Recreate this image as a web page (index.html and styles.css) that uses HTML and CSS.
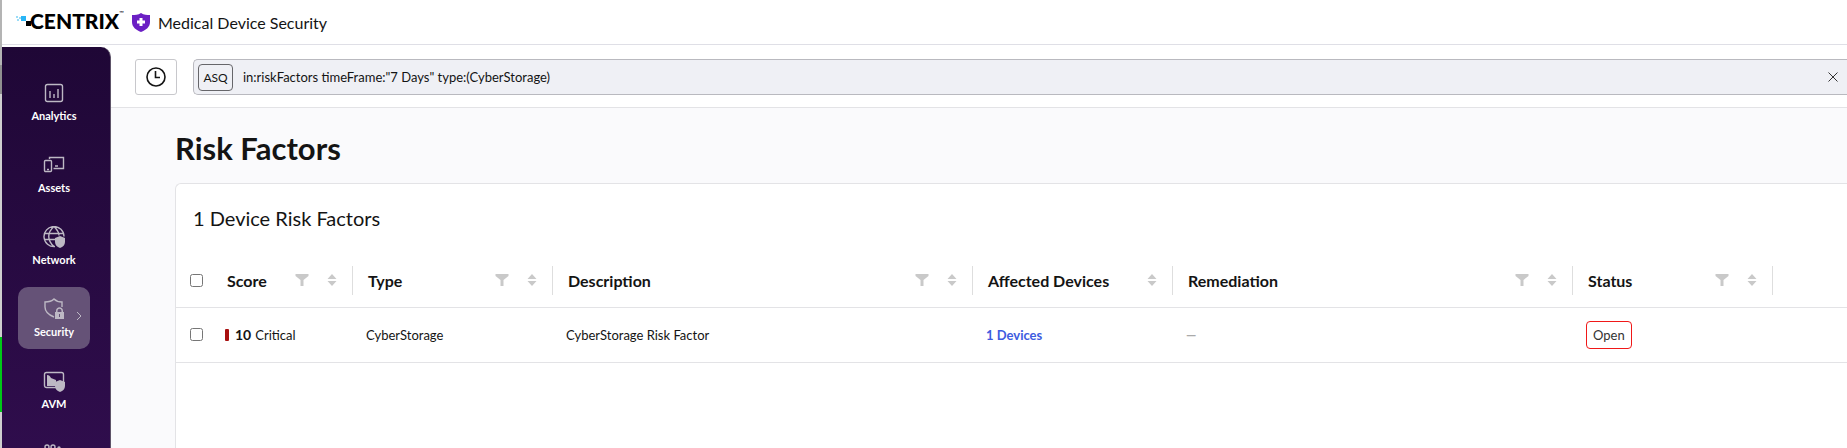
FILE: index.html
```html
<!DOCTYPE html>
<html lang="en">
<head>
  <meta charset="UTF-8" />
  <title>Medical Device Security - Risk Factors</title>
  <link rel="stylesheet" href="styles.css">
</head>
<body>
  <!-- Shared icons -->
  <svg class="icon-defs" width="0" height="0">
    <symbol id="filter" viewBox="0 0 14 12"><path d="M.5 0h13v2L8.500 6v6h-3V6L.5 2z" /></symbol>
    <symbol id="sort" viewBox="0 0 10 12"><path d="M5 0l4.500 5h-9zM.5 7h9L5 12z" /></symbol>
    <symbol id="mini-shield" viewBox="0 0 10 12"><path d="M5 0l5 2v4c0 3-2 5-5 6-3-1-5-3-5-6V2z" /></symbol>
  </svg>

  <div class="app">
    <div class="edge"></div>
    <header class="topbar">
      <div class="logo">
        <svg width="17" height="17" viewBox="0 0 17 17">
          <path fill="#9adcf7" d="M0 4h2v2H0zM1 7h2v2H1zM3 5h2v2H3z" />
          <path fill="#29b5f6" d="M5 4h5v5H5z" />
          <path fill="#000" d="M10 9h5v5h-5z" />
        </svg>
        <span class="logo-text">CENTRIX</span><span class="tm">™</span>
      </div>
      <svg class="product-icon" width="18" height="19" viewBox="0 0 18 19">
        <path fill="#6b1fc4" d="M9 0c3 2 6 2 9 2v7c0 5-4 8-9 10-5-2-9-5-9-10V2c3 0 6 0 9-2z" />
        <path fill="#fff" d="M7.500 5h3v2.500H13v3h-2.500V13h-3v-2.500H5v-3h2.500z" />
      </svg>
      <span class="product">Medical Device Security</span>
    </header>

    <div class="body">
      <nav class="sidebar">
        <a class="nav-item" href="#">
          <svg width="22" height="22" viewBox="0 0 22 22">
            <rect x="2.500" y="2.500" width="17" height="17" rx="2" />
            <path d="M7 9v7M11 12v4M15 7v9" />
          </svg>
          <span>Analytics</span>
        </a>
        <a class="nav-item" href="#">
          <svg width="22" height="22" viewBox="0 0 22 22">
            <path d="M6.500 5V3.500h14v11h-10" />
            <rect x="1.500" y="6.500" width="7" height="11" rx="1" />
            <path d="M4 15.500h2M12 12h3" />
          </svg>
          <span>Assets</span>
        </a>
        <a class="nav-item" href="#">
          <svg width="22" height="22" viewBox="0 0 22 22">
            <path d="M12 20.500a10 10 0 1 1 9-10M1 7.500h19M1 13.500h11M11 .5c-7 6-7 14 0 20M11 .5c3 3 5 6 5 9" />
            <use class="solid" href="#mini-shield" x="12" y="10" width="10" height="12" />
          </svg>
          <span>Network</span>
        </a>
        <a class="nav-item active" href="#">
          <svg width="22" height="22" viewBox="0 0 22 22">
            <path d="M11 19c-5-2-9-5-9-10V4c4 0 7-1 9-3 2 2 5 3 8 3v5" />
            <path class="solid" fill-rule="evenodd" d="M12 14h1v-1c0-5 7-5 7 0v1h1v7h-9zM14.500 14h4v-1c0-3-4-3-4 0zM16 16v3h1v-3z" />
          </svg>
          <span>Security</span>
          <svg class="chevron" width="6" height="10" viewBox="0 0 6 10"><path d="M1 1l4 4-4 4" /></svg>
        </a>
        <a class="nav-item" href="#">
          <svg width="22" height="22" viewBox="0 0 22 22">
            <rect x="1.500" y="2.500" width="19" height="15" rx="2" />
            <path class="solid" d="M4 5c2 0 3 1 4 3l5 2v6H4z" />
            <use class="solid" href="#mini-shield" x="12" y="10" width="10" height="12" />
          </svg>
          <span>AVM</span>
        </a>
        <a class="nav-item" href="#" aria-label="More">
          <svg width="22" height="22" viewBox="0 0 22 22">
            <circle cx="4" cy="5" r="2" /><circle cx="10" cy="5" r="2" /><circle cx="16" cy="6" r="1" />
          </svg>
        </a>
      </nav>

      <main class="main">
        <form class="search-row">
          <button class="time-btn" type="button" aria-label="Time range">
            <svg width="22" height="22" viewBox="0 0 22 22"><circle cx="11" cy="11" r="9" /><path d="M10.500 5v6.500H15" /></svg>
          </button>
          <div class="search-box">
            <button class="asq" type="button">ASQ</button>
            <input type="text" aria-label="Query" value="in:riskFactors timeFrame:&quot;7 Days&quot; type:(CyberStorage)">
            <button class="clear-btn" type="button" aria-label="Clear">
              <svg width="10" height="10" viewBox="0 0 10 10"><path d="M.5.5l9 9M9.500.5l-9 9" /></svg>
            </button>
          </div>
        </form>

        <div class="content">
          <h1>Risk Factors</h1>
          <section class="card">
            <h2>1 Device Risk Factors</h2>
            <table>
              <colgroup>
                <col class="col-check"><col class="col-score"><col class="col-md"><col class="col-desc">
                <col class="col-md"><col class="col-rem"><col class="col-md"><col>
              </colgroup>
              <thead>
                <tr>
                  <th class="check"><input type="checkbox" aria-label="Select all"></th>
                  <th><div class="head"><span>Score</span><svg class="filter"><use href="#filter" /></svg><svg class="sort"><use href="#sort" /></svg></div></th>
                  <th><div class="head"><span>Type</span><svg class="filter"><use href="#filter" /></svg><svg class="sort"><use href="#sort" /></svg></div></th>
                  <th><div class="head"><span>Description</span><svg class="filter"><use href="#filter" /></svg><svg class="sort"><use href="#sort" /></svg></div></th>
                  <th><div class="head"><span>Affected Devices</span><svg class="sort"><use href="#sort" /></svg></div></th>
                  <th><div class="head"><span>Remediation</span><svg class="filter"><use href="#filter" /></svg><svg class="sort"><use href="#sort" /></svg></div></th>
                  <th><div class="head"><span>Status</span><svg class="filter"><use href="#filter" /></svg><svg class="sort"><use href="#sort" /></svg></div></th>
                  <th></th>
                </tr>
              </thead>
              <tbody>
                <tr>
                  <td class="check"><input type="checkbox" aria-label="Select row"></td>
                  <td><div class="score"><i class="bar"></i><b>10</b><span>Critical</span></div></td>
                  <td>CyberStorage</td>
                  <td>CyberStorage Risk Factor</td>
                  <td><a class="link" href="#">1 Devices</a></td>
                  <td><span class="dash">—</span></td>
                  <td><span class="status">Open</span></td>
                  <td></td>
                </tr>
              </tbody>
            </table>
          </section>
        </div>
      </main>
    </div>
  </div>
</body>
</html>
```

FILE: styles.css
```css
:root {
  --text: #141414;
  --border: #e3e3e6;
  --grey: #c9c9c9;
  --nav-icon: #bdb8c4;
}

*, *::before, *::after {
  box-sizing: border-box;
  margin: 0;
  padding: 0;
}

body {
  font-family: Lato, "Liberation Sans", sans-serif;
  font-size: 13px;
  color: var(--text);
  background: #fff;
}

button {
  font-family: inherit;
  background: #fff;
  cursor: pointer;
}

.icon-defs {
  position: absolute;
}

.app {
  position: relative;
  display: flex;
  flex-direction: column;
  height: 100vh;
  padding-left: 2px;
  overflow: hidden;
}

/* Window edge */
.edge {
  position: absolute;
  top: 0;
  bottom: 0;
  left: 0;
  width: 2px;
  background: linear-gradient(#b4b4b4 0 65px, #909090 65px 94px, #cfcfcf 94px 337px, #00c818 337px 412px, #cfcfcf 412px);
}

/* Top bar */
.topbar {
  flex: none;
  display: flex;
  align-items: center;
  height: 45px;
  padding-left: 14px;
  border-bottom: 1px solid #dfdfe6;
}

.logo {
  display: flex;
  align-items: center;
  width: 116px;
  padding-bottom: 3px;
  color: #000;
}

.logo-text {
  margin-left: -3px;
  font-size: 21px;
  font-weight: 900;
  line-height: 24px;
}

.tm {
  align-self: flex-start;
  font-size: 6px;
}

.product {
  margin-left: 8px;
  font-size: 16px;
}

.body {
  flex: 1;
  display: flex;
  min-height: 0;
}

/* Sidebar */
.sidebar {
  flex: none;
  display: flex;
  flex-direction: column;
  align-items: center;
  gap: 10px;
  width: 109px;
  margin-top: 2px;
  padding: 24px 4px 0 0;
  background: linear-gradient(#1f0736, #2f0d4c);
  border-right: 1px solid #5d5368;
  border-top-right-radius: 10px;
  overflow: hidden;
}

.nav-item {
  position: relative;
  flex: none;
  display: flex;
  flex-direction: column;
  align-items: center;
  gap: 5px;
  width: 72px;
  height: 62px;
  padding-top: 11px;
  border-radius: 10px;
  color: #fff;
  font-size: 11px;
  font-weight: 700;
  line-height: 14px;
  text-decoration: none;
}

.nav-item.active {
  background: #655277;
}

.nav-item svg {
  fill: none;
  stroke: var(--nav-icon);
  stroke-width: 1.4;
}

.nav-item .solid {
  fill: var(--nav-icon);
  stroke: none;
}

.nav-item .chevron {
  position: absolute;
  top: 24px;
  right: 8px;
  stroke-width: 1;
}

/* Search */
.main {
  flex: 1;
  display: flex;
  flex-direction: column;
  min-width: 0;
}

.search-row {
  flex: none;
  display: flex;
  align-items: center;
  gap: 16px;
  height: 63px;
  padding: 2px 0 0 24px;
  border-bottom: 1px solid var(--border);
}

.time-btn {
  display: flex;
  align-items: center;
  justify-content: center;
  width: 42px;
  height: 36px;
  border: 1px solid #c8c8cc;
  border-radius: 3px;
}

.time-btn svg,
.clear-btn svg {
  fill: none;
  stroke: #141414;
  stroke-width: 1.6;
}

.search-box {
  flex: 1;
  display: flex;
  align-items: center;
  height: 36px;
  padding: 0 9px 0 4px;
  background: #eff0f5;
  border: 1px solid #b9b9bf;
  border-right: 0;
  border-radius: 5px 0 0 5px;
}

.asq {
  width: 35px;
  height: 27px;
  background: none;
  border: 1px solid #66666a;
  border-radius: 4px;
  color: var(--text);
  font-size: 12px;
}

.search-box input {
  flex: 1;
  padding-left: 10px;
  background: none;
  border: 0;
  color: var(--text);
  font-family: inherit;
  font-size: 13px;
}

.clear-btn {
  display: flex;
  background: none;
  border: 0;
}

.clear-btn svg {
  stroke: #333;
  stroke-width: 1;
}

/* Content */
.content {
  flex: 1;
  display: flex;
  flex-direction: column;
  min-height: 0;
  padding: 20px 0 0 64px;
  background: #fafafc;
}

h1 {
  margin-bottom: 15px;
  font-size: 31px;
  font-weight: 700;
  line-height: 40px;
}

.card {
  flex: 1;
  background: #fff;
  border: 1px solid var(--border);
  border-width: 1px 0 0 1px;
  border-top-left-radius: 6px;
}

h2 {
  padding: 21px 17px 23px;
  font-size: 20px;
  font-weight: 400;
  line-height: 26px;
}

table {
  width: 100%;
  table-layout: fixed;
  border-collapse: collapse;
}

.col-check { width: 36px; }
.col-score { width: 141px; }
.col-md { width: 200px; }
.col-desc { width: 420px; }
.col-rem { width: 400px; }

th,
td {
  border-bottom: 1px solid var(--border);
  text-align: left;
}

th {
  height: 53px;
  font-size: 16px;
}

td {
  height: 55px;
  padding-left: 13px;
}

.check {
  padding-left: 14px;
}

input[type="checkbox"] {
  display: block;
  width: 13px;
  height: 13px;
}

.head {
  display: flex;
  align-items: center;
  height: 29px;
  padding: 0 15px;
  border-right: 1px solid #dedede;
}

.head span {
  flex: 1;
}

.head svg {
  height: 12px;
  fill: var(--grey);
}

.head .filter {
  width: 14px;
}

.head .sort {
  width: 10px;
  margin-left: 18px;
}

.score {
  display: flex;
  align-items: center;
}

.score b {
  margin: 0 4px 0 6px;
  font-size: 14px;
}

.bar {
  width: 4px;
  height: 12px;
  background: #a81010;
  border-radius: 1px;
}

.link {
  color: #3d5ce0;
  font-weight: 700;
  text-decoration: none;
}

.dash {
  color: #aaa;
  font-weight: 700;
}

.status {
  display: inline-block;
  padding: 0 6px;
  border: 1px solid #f01818;
  border-radius: 4px;
  color: #333;
  line-height: 26px;
}
```
